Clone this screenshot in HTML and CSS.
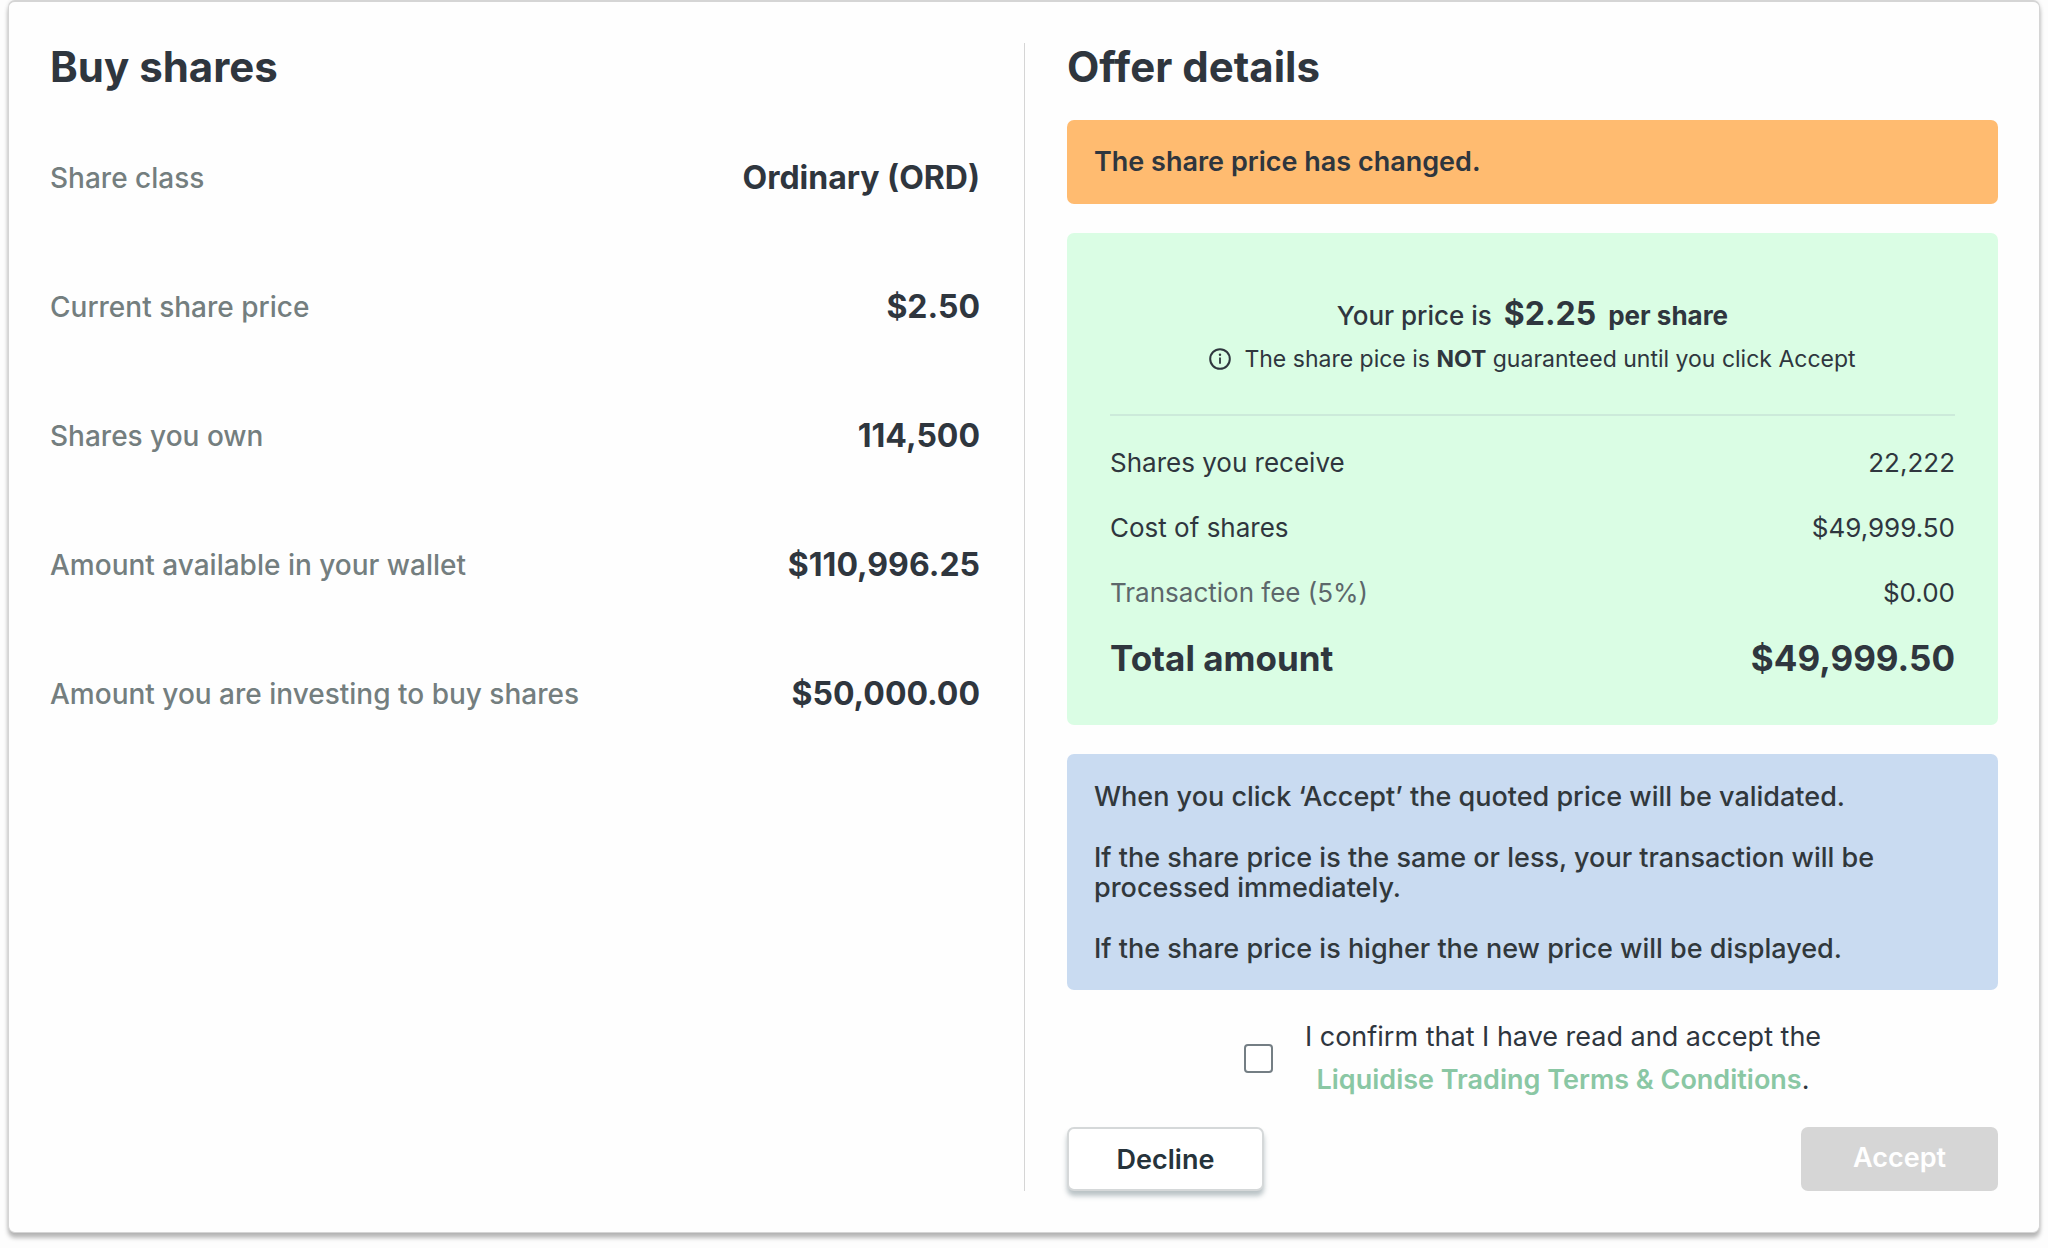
FILE: index.html
```html
<!DOCTYPE html>
<html lang="en">
<head>
<meta charset="utf-8">
<meta name="viewport" content="width=device-width, initial-scale=1">
<title>Buy shares</title>
<link rel="stylesheet" href="styles.css">
</head>
<body>
<main class="card">
  <section class="summary">
    <h1 class="title">Buy shares</h1>
    <dl class="facts">
      <div class="fact"><dt>Share class</dt><dd>Ordinary (ORD)</dd></div>
      <div class="fact"><dt>Current share price</dt><dd>$2.50</dd></div>
      <div class="fact"><dt>Shares you own</dt><dd>114,500</dd></div>
      <div class="fact"><dt>Amount available in your wallet</dt><dd>$110,996.25</dd></div>
      <div class="fact"><dt>Amount you are investing to buy shares</dt><dd>$50,000.00</dd></div>
    </dl>
  </section>
  <section class="offer">
    <h2 class="title">Offer details</h2>
    <p class="alert" role="alert">The share price has changed.</p>
    <div class="quote">
      <p class="price"><span>Your price is</span> <strong class="amount">$2.25</strong> <strong>per share</strong></p>
      <p class="note">
        <svg class="info" viewBox="0 0 22 22" aria-hidden="true"><circle cx="11" cy="11" r="9.8" fill="none" stroke="currentColor" stroke-width="2"/><path d="M11 9.6v6.2" stroke="currentColor" stroke-width="1.8"/><circle cx="11" cy="6.7" r="1.2" fill="currentColor"/></svg>
        <span>The share pice is <strong>NOT</strong> guaranteed until you click Accept</span>
      </p>
      <dl class="costs">
        <div class="cost"><dt>Shares you receive</dt><dd>22,222</dd></div>
        <div class="cost"><dt>Cost of shares</dt><dd>$49,999.50</dd></div>
        <div class="cost fee"><dt>Transaction fee (5%)</dt><dd>$0.00</dd></div>
        <div class="cost total"><dt>Total amount</dt><dd>$49,999.50</dd></div>
      </dl>
    </div>
    <div class="terms">
      <p>When you click ‘Accept’ the quoted price will be validated.</p>
      <p>If the share price is the same or less, your transaction will be processed immediately.</p>
      <p>If the share price is higher the new price will be displayed.</p>
    </div>
    <div class="confirm">
      <input class="tick" type="checkbox" id="agree">
      <label class="agree" for="agree">I confirm that I have read and accept the<br><a href="#terms">Liquidise Trading Terms &amp; Conditions</a>.</label>
    </div>
    <div class="actions">
      <button class="button decline" type="button">Decline</button>
      <button class="button accept" type="button" disabled>Accept</button>
    </div>
  </section>
</main>
</body>
</html>
```
FILE: styles.css
```css
* {
  box-sizing: border-box;
}

body {
  margin: 0;
  padding: 0 8px 14px;
  background: #fdfdfd;
  color: #2f363e;
  font-family: Inter, "Liberation Sans", sans-serif;
  font-size: 27px;
}

h1, h2, p, dl, dd {
  margin: 0;
}

.card {
  display: grid;
  grid-template-columns: 1fr 1fr;
  padding: 41px;
  background: #fefefe;
  border: 1px solid #d5d5d5;
  border-top-width: 2px;
  border-radius: 7px;
  box-shadow: 0 5px 4px rgba(0, 0, 0, 0.26), 0 0 4px rgba(0, 0, 0, 0.1);
}

.summary {
  padding-right: 44px;
}

.offer {
  padding-left: 42px;
  border-left: 1px solid #d5d5d5;
}

.title {
  font-size: 42px;
  font-weight: 700;
  line-height: 48px;
}

.facts {
  margin-top: 22px;
}

.fact {
  display: flex;
  align-items: center;
  justify-content: space-between;
  height: 129px;
}

.fact dt {
  color: #747e7f;
  font-size: 28px;
  font-weight: 500;
}

.fact dd {
  font-size: 32px;
  font-weight: 700;
}

.alert {
  margin-top: 29px;
  padding: 27px;
  border-radius: 7px;
  background: #ffbb70;
  font-weight: 600;
  line-height: 30px;
}

.quote {
  margin-top: 29px;
  padding: 60px 43px 35px;
  border-radius: 7px;
  background: #dafde4;
}

.price {
  display: flex;
  align-items: baseline;
  justify-content: center;
  gap: 12px;
  font-size: 26px;
  font-weight: 500;
  line-height: 42px;
}

.amount {
  font-size: 32px;
}

.note {
  display: flex;
  align-items: center;
  justify-content: center;
  gap: 13px;
  font-size: 23px;
  line-height: 44px;
}

.info {
  width: 22px;
  height: 22px;
}

.costs {
  margin-top: 33px;
  padding-top: 14px;
  border-top: 2px solid #cceada;
}

.cost {
  display: flex;
  align-items: center;
  justify-content: space-between;
  height: 65px;
  font-size: 26px;
}

.fee dt {
  color: #5c676b;
}

.total {
  font-size: 35px;
  font-weight: 700;
}

.terms {
  display: grid;
  gap: 31px;
  margin-top: 29px;
  padding: 28px 27px 26px;
  border-radius: 7px;
  background: #c9dbf1;
  color: #31383c;
  font-weight: 500;
  line-height: 30px;
}

.confirm {
  display: flex;
  align-items: center;
  justify-content: center;
  gap: 32px;
  margin-top: 25px;
}

.tick {
  appearance: none;
  width: 29px;
  height: 29px;
  margin: 0;
  border: 2px solid #747e84;
  border-radius: 4px;
  background: #fff;
}

.agree {
  line-height: 43px;
  text-align: center;
}

.agree a {
  color: #8ac7a4;
  font-weight: 600;
  text-decoration: none;
}

.actions {
  display: flex;
  justify-content: space-between;
  margin-top: 26px;
}

.button {
  width: 197px;
  height: 64px;
  padding: 0;
  border: 0;
  border-radius: 7px;
  font: 600 27px Inter, "Liberation Sans", sans-serif;
}

.decline {
  border: 2px solid #d5d8d9;
  background: #fff;
  color: #26333b;
  box-shadow: 0 5px 5px rgba(60, 85, 95, 0.35);
}

.accept {
  padding-bottom: 4px;
  background: #d6d6d6;
  color: #fff;
}
```
